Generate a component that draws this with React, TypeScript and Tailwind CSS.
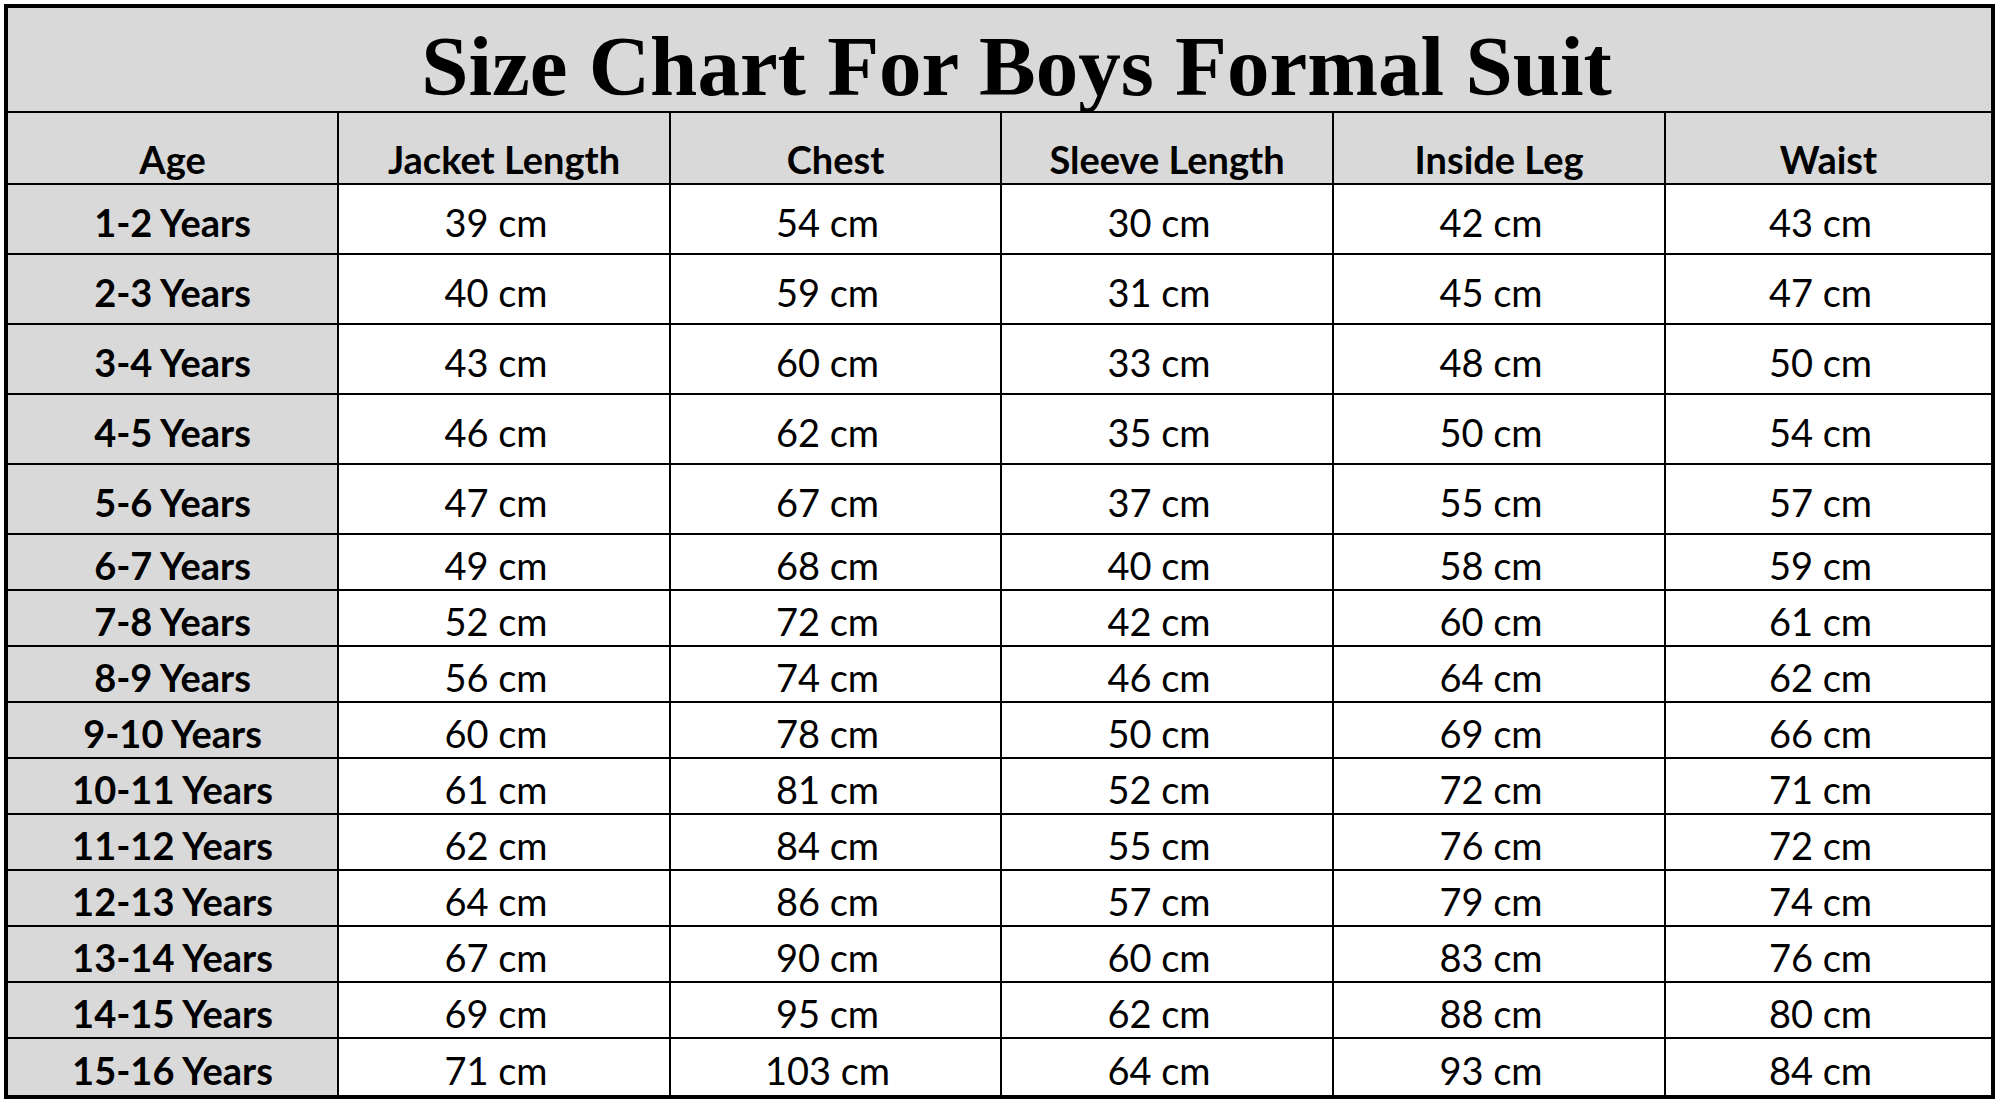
const columns = ["Age", "Jacket Length", "Chest", "Sleeve Length", "Inside Leg", "Waist"];

// age, jacket, chest, sleeve, inside leg, waist (cm)
const rows: [string, number, number, number, number, number][] = [
  ["1-2 Years", 39, 54, 30, 42, 43],
  ["2-3 Years", 40, 59, 31, 45, 47],
  ["3-4 Years", 43, 60, 33, 48, 50],
  ["4-5 Years", 46, 62, 35, 50, 54],
  ["5-6 Years", 47, 67, 37, 55, 57],
  ["6-7 Years", 49, 68, 40, 58, 59],
  ["7-8 Years", 52, 72, 42, 60, 61],
  ["8-9 Years", 56, 74, 46, 64, 62],
  ["9-10 Years", 60, 78, 50, 69, 66],
  ["10-11 Years", 61, 81, 52, 72, 71],
  ["11-12 Years", 62, 84, 55, 76, 72],
  ["12-13 Years", 64, 86, 57, 79, 74],
  ["13-14 Years", 67, 90, 60, 83, 76],
  ["14-15 Years", 69, 95, 62, 88, 80],
  ["15-16 Years", 71, 103, 64, 93, 84],
];

const body = "font-['Lato','Open_Sans',sans-serif]";
const grid = "grid grid-cols-[331px_332px_331px_332px_332px_1fr]";

export default function App() {
  return (
    <div className="min-h-[1100px] w-[2000px] bg-white pl-[4px] pt-[4px]">
      <div className={`w-[1991px] border-4 border-black text-black ${body}`}>
        <div className="flex h-[105px] items-center justify-center border-b-2 border-black bg-[#d9d9d9] pl-[34px] pt-[14px]">
          <h1 className="font-['Liberation_Serif','Times_New_Roman',serif] text-[85px] font-bold leading-none">
            Size Chart For Boys Formal Suit
          </h1>
        </div>

        <div className={`${grid} h-[72px] border-b-2 border-black bg-[#d9d9d9]`}>
          {columns.map((c, i) => (
            <div
              key={c}
              className={`flex items-end justify-center pb-[5px] text-[38px] font-bold leading-none ${
                i < 5 ? "border-r-2 border-black" : ""
              }`}
            >
              {c}
            </div>
          ))}
        </div>

        {rows.map((r, ri) => {
          const tall = ri < 5;
          const last = ri === rows.length - 1;
          return (
            <div
              key={r[0]}
              className={`${grid} ${tall ? "h-[70px]" : "h-[56px]"} ${
                last ? "" : "border-b-2 border-black"
              }`}
            >
              {r.map((v, ci) => (
                <div
                  key={ci}
                  className={`flex items-center justify-center pt-[6px] text-[38px] leading-none ${
                    ci === 0 ? "bg-[#d9d9d9] font-bold" : "bg-white pr-[16px]"
                  } ${ci < 5 ? "border-r-2 border-black" : ""}`}
                >
                  {ci === 0 ? v : `${v} cm`}
                </div>
              ))}
            </div>
          );
        })}
      </div>
    </div>
  );
}
